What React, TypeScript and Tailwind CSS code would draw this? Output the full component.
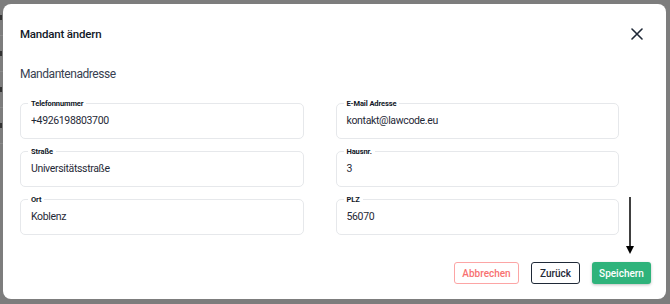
import React from 'react';

interface FieldProps {
  label: string;
  value: string;
}

const Field: React.FC<FieldProps> = ({ label, value }) => (
  <div className="relative h-[36px] rounded-[5px] border border-[#e6e8eb] flex items-center pl-[10px]">
    <span className="absolute -top-[5px] left-[7px] px-[3px] bg-white text-[7.5px] leading-[9px] font-bold tracking-[-0.1px] text-[#111827]">
      {label}
    </span>
    <span className="text-[10.5px] tracking-[-0.35px] text-[#1f2937]">{value}</span>
  </div>
);

const fields: FieldProps[] = [
  { label: 'Telefonnummer', value: '+4926198803700' },
  { label: 'E-Mail Adresse', value: 'kontakt@lawcode.eu' },
  { label: 'Straße', value: 'Universitätsstraße' },
  { label: 'Hausnr.', value: '3' },
  { label: 'Ort', value: 'Koblenz' },
  { label: 'PLZ', value: '56070' },
];

const App: React.FC = () => {
  return (
    <div className="relative w-[670px] h-[304px] bg-[#7d7d7d] overflow-hidden" style={{ fontFamily: 'Roboto, "Noto Sans", sans-serif' }}>
      {/* page behind the overlay */}
      <div className="absolute left-0 top-0 w-[3px] flex flex-col">
        {[0, 1, 2, 3].map(i => (
          <div key={i} className="h-[36px] border-b border-[#8a8a8a] flex items-center">
            <span className="w-[2px] h-[5px] bg-[#333]" />
          </div>
        ))}
      </div>

      <div className="absolute left-[3px] top-[4px] w-[663px] h-[295px] bg-white rounded-[8px] pl-[17px] pr-[15px] pt-[23px] flex flex-col">
        <div className="flex items-center justify-between">
          <h2 className="text-[11.5px] leading-[14px] font-medium tracking-[-0.2px] text-[#111827]">Mandant ändern</h2>
          <svg width="12" height="12" viewBox="0 0 12 12" className="mr-[8px]">
            <path d="M1 1 L11 11 M11 1 L1 11" stroke="#1f2937" strokeWidth="1.6" strokeLinecap="round" />
          </svg>
        </div>

        <h3 className="mt-[25px] text-[12px] leading-[16px] tracking-[-0.45px] text-[#374151]">Mandantenadresse</h3>

        <div className="mt-[21px] w-[599px] grid grid-cols-2 gap-x-[32px] gap-y-[12px]">
          {fields.map(f => (
            <Field key={f.label} label={f.label} value={f.value} />
          ))}
        </div>

        <div className="mt-[27px] flex justify-end gap-[12px]">
          <button className="h-[22px] w-[65px] rounded-[3px] border border-[#fca5a5] text-[10px] font-medium text-[#f87171]">
            Abbrechen
          </button>
          <button className="h-[22px] w-[49px] rounded-[3px] border-[1.5px] border-[#1f2937] text-[10px] font-medium text-[#1f2937]">
            Zurück
          </button>
          <button className="h-[22px] w-[59px] rounded-[3px] bg-[#2fb37b] text-[10px] font-medium text-white shadow-[0_1px_3px_rgba(0,0,0,0.25)]">
            Speichern
          </button>
        </div>

        {/* annotation arrow */}
        <svg width="10" height="58" viewBox="0 0 10 58" className="absolute left-[622px] top-[193px]">
          <line x1="5" y1="0" x2="5" y2="50" stroke="#000" strokeWidth="1.5" />
          <path d="M1 49 L9 49 L5 57 Z" fill="#000" />
        </svg>
      </div>
    </div>
  );
};

export default App;
